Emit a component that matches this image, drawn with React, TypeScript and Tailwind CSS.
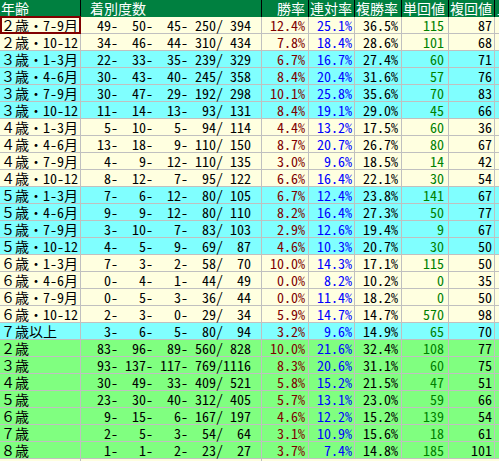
import React from "react";

type Row = {
  label: string;
  counts: number[];
  win: string;
  rentai: string;
  fukusho: string;
  tan: number;
  fuku: number;
  bg: string;
};

const Y = "bg-[#ffffe0]";
const C = "bg-[#80ffff]";
const G = "bg-[#80ff80]";

const rows: Row[] = [
  { label: "２歳・7-9月", counts: [49, 50, 45, 250, 394], win: "12.4%", rentai: "25.1%", fukusho: "36.5%", tan: 115, fuku: 87, bg: Y },
  { label: "２歳・10-12", counts: [34, 46, 44, 310, 434], win: "7.8%", rentai: "18.4%", fukusho: "28.6%", tan: 101, fuku: 68, bg: Y },
  { label: "３歳・1-3月", counts: [22, 33, 35, 239, 329], win: "6.7%", rentai: "16.7%", fukusho: "27.4%", tan: 60, fuku: 71, bg: C },
  { label: "３歳・4-6月", counts: [30, 43, 40, 245, 358], win: "8.4%", rentai: "20.4%", fukusho: "31.6%", tan: 57, fuku: 76, bg: C },
  { label: "３歳・7-9月", counts: [30, 47, 29, 192, 298], win: "10.1%", rentai: "25.8%", fukusho: "35.6%", tan: 70, fuku: 83, bg: C },
  { label: "３歳・10-12", counts: [11, 14, 13, 93, 131], win: "8.4%", rentai: "19.1%", fukusho: "29.0%", tan: 45, fuku: 66, bg: C },
  { label: "４歳・1-3月", counts: [5, 10, 5, 94, 114], win: "4.4%", rentai: "13.2%", fukusho: "17.5%", tan: 60, fuku: 36, bg: Y },
  { label: "４歳・4-6月", counts: [13, 18, 9, 110, 150], win: "8.7%", rentai: "20.7%", fukusho: "26.7%", tan: 80, fuku: 67, bg: Y },
  { label: "４歳・7-9月", counts: [4, 9, 12, 110, 135], win: "3.0%", rentai: "9.6%", fukusho: "18.5%", tan: 14, fuku: 42, bg: Y },
  { label: "４歳・10-12", counts: [8, 12, 7, 95, 122], win: "6.6%", rentai: "16.4%", fukusho: "22.1%", tan: 30, fuku: 54, bg: Y },
  { label: "５歳・1-3月", counts: [7, 6, 12, 80, 105], win: "6.7%", rentai: "12.4%", fukusho: "23.8%", tan: 141, fuku: 67, bg: C },
  { label: "５歳・4-6月", counts: [9, 9, 12, 80, 110], win: "8.2%", rentai: "16.4%", fukusho: "27.3%", tan: 50, fuku: 77, bg: C },
  { label: "５歳・7-9月", counts: [3, 10, 7, 83, 103], win: "2.9%", rentai: "12.6%", fukusho: "19.4%", tan: 9, fuku: 67, bg: C },
  { label: "５歳・10-12", counts: [4, 5, 9, 69, 87], win: "4.6%", rentai: "10.3%", fukusho: "20.7%", tan: 30, fuku: 50, bg: C },
  { label: "６歳・1-3月", counts: [7, 3, 2, 58, 70], win: "10.0%", rentai: "14.3%", fukusho: "17.1%", tan: 115, fuku: 50, bg: Y },
  { label: "６歳・4-6月", counts: [0, 4, 1, 44, 49], win: "0.0%", rentai: "8.2%", fukusho: "10.2%", tan: 0, fuku: 35, bg: Y },
  { label: "６歳・7-9月", counts: [0, 5, 3, 36, 44], win: "0.0%", rentai: "11.4%", fukusho: "18.2%", tan: 0, fuku: 50, bg: Y },
  { label: "６歳・10-12", counts: [2, 3, 0, 29, 34], win: "5.9%", rentai: "14.7%", fukusho: "14.7%", tan: 570, fuku: 98, bg: Y },
  { label: "７歳以上", counts: [3, 6, 5, 80, 94], win: "3.2%", rentai: "9.6%", fukusho: "14.9%", tan: 65, fuku: 70, bg: C },
  { label: "２歳", counts: [83, 96, 89, 560, 828], win: "10.0%", rentai: "21.6%", fukusho: "32.4%", tan: 108, fuku: 77, bg: G },
  { label: "３歳", counts: [93, 137, 117, 769, 1116], win: "8.3%", rentai: "20.6%", fukusho: "31.1%", tan: 60, fuku: 75, bg: G },
  { label: "４歳", counts: [30, 49, 33, 409, 521], win: "5.8%", rentai: "15.2%", fukusho: "21.5%", tan: 47, fuku: 51, bg: G },
  { label: "５歳", counts: [23, 30, 40, 312, 405], win: "5.7%", rentai: "13.1%", fukusho: "23.0%", tan: 59, fuku: 66, bg: G },
  { label: "６歳", counts: [9, 15, 6, 167, 197], win: "4.6%", rentai: "12.2%", fukusho: "15.2%", tan: 139, fuku: 54, bg: G },
  { label: "７歳", counts: [2, 5, 3, 54, 64], win: "3.1%", rentai: "10.9%", fukusho: "15.6%", tan: 18, fuku: 61, bg: G },
  { label: "８歳", counts: [1, 1, 2, 23, 27], win: "3.7%", rentai: "7.4%", fukusho: "14.8%", tan: 185, fuku: 101, bg: G },
];

const cell = "h-full shrink-0 border-r border-[#c0c0c0]";

const Counts = ({ counts }: { counts: number[] }) => (
  <div className="flex h-full items-center pl-[2px]">
    <span className="w-[35px] text-right">{counts[0]}-</span>
    <span className="w-[35px] text-right">{counts[1]}-</span>
    <span className="w-[35px] text-right">{counts[2]}-</span>
    <span className="w-[35px] text-right">{counts[3]}/</span>
    <span className="w-[28px] text-right">{counts[4]}</span>
  </div>
);

const DataRow = ({ row, selected }: { row: Row; selected?: boolean }) => (
  <div className={`flex h-[17px] border-b border-[#c0c0c0] ${row.bg}`}>
    <div className={`${cell} relative w-[81px] pl-[1px] text-left`}>
      {row.label}
      {selected && (
        <div className="pointer-events-none absolute -top-[1px] -bottom-[1px] left-0 -right-[1px] border-2 border-[#800000]" />
      )}
    </div>
    <div className={`${cell} w-[181px]`}>
      <Counts counts={row.counts} />
    </div>
    <div className={`${cell} w-[47px] pr-[3px] text-right text-[#800000]`}>{row.win}</div>
    <div className={`${cell} w-[46px] pr-[2px] text-right text-[#0000ff]`}>{row.rentai}</div>
    <div className={`${cell} w-[47px] pr-[3px] text-right`}>{row.fukusho}</div>
    <div className={`${cell} w-[47px] pr-[4px] text-right text-[#008000]`}>{row.tan}</div>
    <div className={`${cell} w-[46px] pr-[2px] text-right`}>{row.fuku}</div>
    <div className="h-full flex-1" />
  </div>
);

export default function App() {
  const head = "h-full shrink-0 border-r border-[#000000]";
  return (
    <div className="h-[461px] w-[499px] overflow-hidden bg-white font-['Noto_Sans_Mono_CJK_JP','Noto_Sans_CJK_JP',monospace] text-[14px] leading-[16px] text-black">
      <div className="flex h-[17px] bg-[#008040] text-white">
        <div className={`${head} w-[81px] pl-[1px]`}>年齢</div>
        <div className={`${head} w-[181px] pl-[9px]`}>着別度数</div>
        <div className={`${head} w-[47px] pr-[3px] text-right`}>勝率</div>
        <div className={`${head} w-[46px] pr-[2px] text-right`}>連対率</div>
        <div className={`${head} w-[47px] pr-[3px] text-right`}>複勝率</div>
        <div className={`${head} w-[47px] pr-[3px] text-right`}>単回値</div>
        <div className={`${head} w-[46px] pr-[2px] text-right`}>複回値</div>
        <div className="h-full flex-1 pl-[2px]">上</div>
      </div>
      {rows.map((r, i) => (
        <DataRow key={r.label + i} row={r} selected={i === 0} />
      ))}
      <div className="flex h-[17px] bg-[#ffffe0]">
        <div className={`${cell} w-[81px]`} />
        <div className={`${cell} w-[181px]`} />
      </div>
    </div>
  );
}
